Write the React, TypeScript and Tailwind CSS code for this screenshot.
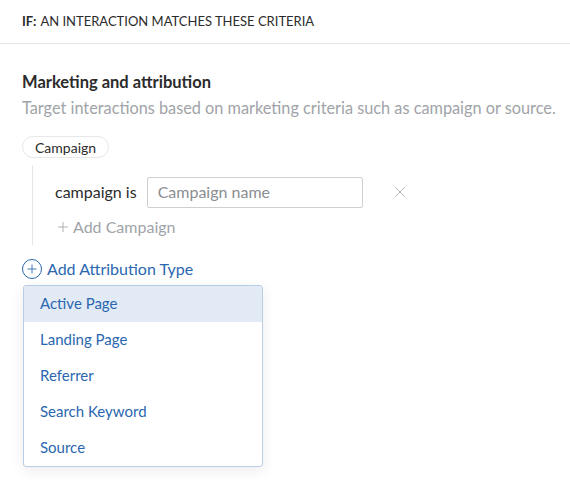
import { X, Plus } from "lucide-react"

const options = ["Active Page", "Landing Page", "Referrer", "Search Keyword", "Source"]

export default function App() {
  return (
    <div className="w-[570px] h-[495px] bg-white text-[#2b2b2b] font-['Lato',sans-serif] overflow-hidden">
      <div className="h-[44px] flex items-center px-[22px] border-b border-[#e6e6e6] text-[13px]">
        <span className="font-bold">IF:</span>
        <span className="ml-1">AN INTERACTION MATCHES THESE CRITERIA</span>
      </div>

      <div className="px-[22px] pt-[26px]">
        <h2 className="text-[16.5px] font-bold leading-[25px]">Marketing and attribution</h2>
        <p className="text-[16.3px] leading-[25px] text-[#a0a4a8] whitespace-nowrap">
          Target interactions based on marketing criteria such as campaign or source.
        </p>

        <div className="mt-[16px] inline-flex h-[22px] items-center rounded-full border border-[#e8e8e8] px-[12px] text-[14px]">
          Campaign
        </div>

        <div className="ml-[10px] mt-[6px] border-l border-[#e6e6e6] pl-[22px] pt-[12px] pb-[6px]">
          <div className="flex items-center">
            <span className="text-[16px] mr-[10px]">campaign is</span>
            <div className="w-[216px] h-[31px] border border-[#cfcfcf] rounded-[2px] flex items-center px-[10px] text-[16px] text-[#8a8d91]">
              Campaign name
            </div>
            <X className="ml-[28px] w-[18px] h-[18px] text-[#9a9a9a]" strokeWidth={1} />
          </div>
          <div className="mt-[7px] flex items-center text-[16px] text-[#a0a4a8]">
            <Plus className="w-[16px] h-[16px] mr-[2px]" strokeWidth={1.25} />
            Add Campaign
          </div>
        </div>

        <div className="mt-[12px] flex items-center text-[16px] text-[#2a67b0]">
          <span className="w-[20px] h-[20px] rounded-full border-[1.5px] border-[#2a67b0] flex items-center justify-center mr-[5px]">
            <Plus className="w-[14px] h-[14px]" strokeWidth={1.5} />
          </span>
          Add Attribution Type
        </div>

        <div className="mt-[4px] w-[240px] ml-[1px] rounded-[3px] border border-[#b8cde6] bg-white shadow-[0_4px_14px_rgba(0,0,0,0.08)] overflow-hidden">
          {options.map((o, i) => (
            <div
              key={o}
              className={`h-[36px] flex items-center px-[16px] text-[15px] text-[#2a67b0] ${i === 0 ? "bg-[#e2eaf5]" : ""}`}
            >
              {o}
            </div>
          ))}
        </div>
      </div>
    </div>
  )
}
